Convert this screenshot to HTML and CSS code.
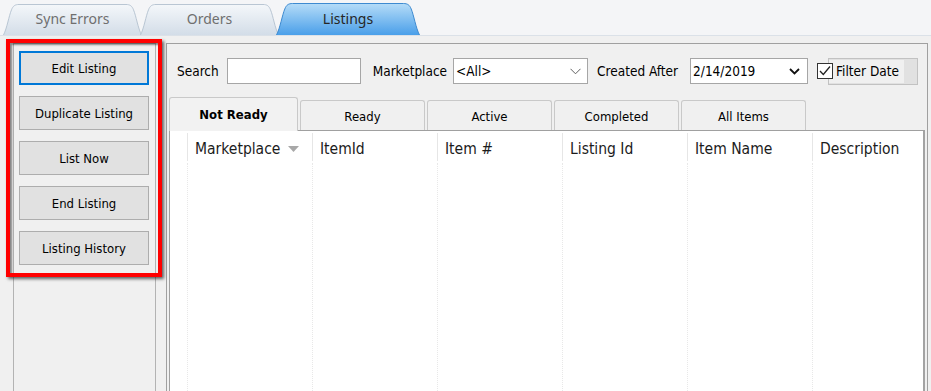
FILE: index.html
```html
<!DOCTYPE html>
<html lang="en">

    <head>
        <meta charset="UTF-8">
        <title>Listings</title>
        <link rel="stylesheet" href="styles.css">
    </head>

    <body>
        <div class="app">
            <svg class="defs" width="0" height="0">
                <defs>
                    <linearGradient id="tabIdle" x1="0" y1="0" x2="0" y2="1">
                        <stop offset="0" stop-color="#f4f7fa" />
                        <stop offset="1" stop-color="#d3dde8" />
                    </linearGradient>
                    <linearGradient id="tabActive" x1="0" y1="0" x2="0" y2="1">
                        <stop offset="0" stop-color="#b5dcf8" />
                        <stop offset="1" stop-color="#4a9fe9" />
                    </linearGradient>
                </defs>
            </svg>

            <!-- main tabs -->
            <div class="topbar">
                <div class="top-tab">
                    <svg class="tab-shape" viewBox="0 0 139 32" preserveAspectRatio="none">
                        <path d="M0.5 32 C4 25 6 12 8.5 6 C10 2 12 0.5 16 0.5 H123 C127 0.5 129 2 130.5 6 C133 12 135 25 138.5 32" fill="url(#tabIdle)" stroke="#b9c6d3" vector-effect="non-scaling-stroke" />
                    </svg>
                    <span>Sync Errors</span>
                </div>
                <div class="top-tab">
                    <svg class="tab-shape" viewBox="0 0 139 32" preserveAspectRatio="none">
                        <path d="M0.5 32 C4 25 6 12 8.5 6 C10 2 12 0.5 16 0.5 H123 C127 0.5 129 2 130.5 6 C133 12 135 25 138.5 32" fill="url(#tabIdle)" stroke="#b9c6d3" vector-effect="non-scaling-stroke" />
                    </svg>
                    <span>Orders</span>
                </div>
                <div class="top-tab active">
                    <svg class="tab-shape" viewBox="0 0 139 32" preserveAspectRatio="none">
                        <path d="M0.5 32 C4 25 6 12 8.5 6 C10 2 12 0.5 16 0.5 H123 C127 0.5 129 2 130.5 6 C133 12 135 25 138.5 32" fill="url(#tabActive)" stroke="#3d8ad0" vector-effect="non-scaling-stroke" />
                    </svg>
                    <span>Listings</span>
                </div>
            </div>

            <div class="workspace">
                <!-- action buttons -->
                <div class="sidebar">
                    <button class="btn focused">Edit Listing</button>
                    <button class="btn">Duplicate Listing</button>
                    <button class="btn">List Now</button>
                    <button class="btn">End Listing</button>
                    <button class="btn">Listing History</button>
                </div>

                <div class="panel">
                    <!-- filter row -->
                    <div class="filters">
                        <label class="field-label">Search</label>
                        <div class="input search"></div>
                        <label class="field-label gap">Marketplace</label>
                        <div class="input select market">
                            <span>&lt;All&gt;</span>
                            <svg width="11" height="7" viewBox="0 0 11 7">
                                <path d="M0.5 0.8 L5.5 5.8 L10.5 0.8" fill="none" stroke="#606060" stroke-width="1" />
                            </svg>
                        </div>
                        <label class="field-label gap-s">Created After</label>
                        <div class="input select date">
                            <span>2/14/2019</span>
                            <svg width="11" height="7" viewBox="0 0 11 7">
                                <path d="M1 1 L5.5 5.5 L10 1" fill="none" stroke="#111" stroke-width="1.8" />
                            </svg>
                        </div>
                        <div class="filter-box">
                            <div class="filter-inner">
                                <span class="check">
                                    <svg width="14" height="14" viewBox="0 0 14 14">
                                        <path d="M2 7 L5.3 10.5 L12 2.5" fill="none" stroke="#222" stroke-width="1.3" />
                                    </svg>
                                </span>
                                <span class="check-label">Filter Date</span>
                            </div>
                        </div>
                    </div>

                    <!-- status tabs -->
                    <div class="tabs">
                        <div class="tab current">Not Ready</div>
                        <div class="tab">Ready</div>
                        <div class="tab">Active</div>
                        <div class="tab">Completed</div>
                        <div class="tab">All Items</div>
                    </div>

                    <!-- listing grid -->
                    <div class="grid">
                        <div class="grid-head">
                            <div class="cell"></div>
                            <div class="cell">Marketplace
                                <svg class="sort" width="11" height="6" viewBox="0 0 11 6">
                                    <path d="M0 0 H11 L5.5 6 Z" fill="#a8a8a8" />
                                </svg>
                            </div>
                            <div class="cell">ItemId</div>
                            <div class="cell">Item #</div>
                            <div class="cell">Listing Id</div>
                            <div class="cell">Item Name</div>
                            <div class="cell">Description</div>
                        </div>
                        <div class="grid-body">
                            <div class="cell"></div>
                            <div class="cell"></div>
                            <div class="cell"></div>
                            <div class="cell"></div>
                            <div class="cell"></div>
                            <div class="cell"></div>
                            <div class="cell"></div>
                        </div>
                    </div>
                </div>
            </div>

            <!-- red annotation frame -->
            <div class="callout"></div>
        </div>
    </body>

</html>
```

FILE: styles.css
```css
* {
    box-sizing: border-box;
    margin: 0;
    padding: 0;
}

body {
    background: #f0f0f0;
    font-family: "DejaVu Sans Condensed", "DejaVu Sans", sans-serif;
    font-stretch: condensed;
}

.app {
    position: relative;
    width: 931px;
    height: 391px;
    overflow: hidden;
}

.defs {
    position: absolute;
}

/* main tabs */
.topbar {
    display: flex;
    align-items: flex-end;
    height: 36px;
    padding-left: 3px;
    background: #f4f5f7;
    border-bottom: 1px solid #dbe1e8;
}

.top-tab {
    position: relative;
    width: 139px;
    height: 31px;
    line-height: 30px;
    text-align: center;
    font-family: "Noto Sans", sans-serif;
    font-stretch: normal;
    font-size: 14px;
    color: #6f6f6f;
}

.top-tab + .top-tab {
    margin-left: -2px;
}

.top-tab.active {
    width: 144px;
    height: 32px;
    line-height: 32px;
    margin-left: -3px;
    color: #262626;
    z-index: 1;
}

.tab-shape {
    position: absolute;
    left: 0;
    top: 0;
    width: 100%;
    height: 100%;
}

.top-tab span {
    position: relative;
}

.workspace {
    display: flex;
    height: 355px;
    padding-top: 7px;
}

/* left buttons */
.sidebar {
    display: flex;
    flex-direction: column;
    gap: 11px;
    width: 143px;
    margin-left: 13px;
    padding: 7px 5px 0 5px;
    border: 1px solid #b3b3b3;
    border-bottom: 0;
}

.btn {
    width: 130px;
    height: 34px;
    background: #e1e1e1;
    border: 1px solid #adadad;
    font-family: inherit;
    font-stretch: condensed;
    font-size: 13px;
    color: #000;
}

.btn.focused {
    border: 2px solid #0078d7;
}

/* right panel */
.panel {
    display: flex;
    flex-direction: column;
    width: 762px;
    margin-left: 10px;
    padding: 0 2px;
    border: 1px solid #a0a0a0;
    border-bottom: 0;
}

.filters {
    display: flex;
    align-items: center;
    height: 28px;
    margin-top: 13px;
    padding-left: 8px;
    font-size: 13.5px;
    color: #000;
}

.field-label {
    margin-right: 8px;
}

.field-label.gap {
    margin-left: 12px;
    margin-right: 6px;
}

.field-label.gap-s {
    margin-left: 9px;
    margin-right: 12px;
}

.input {
    height: 26px;
    background: #fff;
    border: 1px solid #a6a6a6;
}

.search {
    width: 134px;
}

.select {
    display: flex;
    align-items: center;
    justify-content: space-between;
    padding: 0 6px 0 2px;
}

.market {
    width: 135px;
}

.date {
    width: 118px;
    padding-right: 7px;
}

.filter-box {
    width: 90px;
    height: 27px;
    margin-left: 20px;
    padding: 1px 0;
    background: #e1e1e1;
    border: 1px solid #c2c2c2;
}

.filter-inner {
    display: flex;
    align-items: center;
    width: 75px;
    height: 23px;
    background: #f0f0f0;
}

.check {
    display: flex;
    width: 16px;
    height: 16px;
    margin-left: -12px;
    background: #fff;
    border: 1px solid #333;
}

.check-label {
    margin-left: 3px;
    white-space: nowrap;
}

/* status tabs */
.tabs {
    position: relative;
    z-index: 1;
    display: flex;
    align-items: flex-end;
    gap: 2px;
    height: 33px;
    margin-top: 12px;
    font-size: 13px;
}

.tab {
    width: 125px;
    height: 30px;
    line-height: 31px;
    text-align: center;
    background: #f0f0f0;
    border: 1px solid #c9c9c9;
    border-bottom: 0;
    border-radius: 3px 3px 0 0;
}

.tab.current {
    width: 129px;
    height: 34px;
    line-height: 33px;
    margin-bottom: -1px;
    font-weight: bold;
    background: #f2f2f2;
}

/* grid */
.grid {
    display: flex;
    flex-direction: column;
    flex: 1;
    background: #fff;
    border: 1px solid #a0a0a0;
    border-right: 2px solid #a3a3a3;
    border-bottom: 0;
}

.grid-head,
.grid-body {
    display: grid;
    grid-template-columns: 17px repeat(5, 125px) 1fr;
}

.grid-head {
    height: 32px;
    font-size: 15.5px;
    color: #1c1c1c;
}

.grid-head .cell {
    display: flex;
    align-items: center;
    margin: 2px 0;
    padding: 3px 0 0 7px;
    border-left: 1px solid #e6e6e6;
    white-space: nowrap;
}

.grid-head .cell:first-child,
.grid-body .cell:first-child {
    border-left: 0;
}

.sort {
    margin-left: 8px;
}

.grid-body {
    flex: 1;
}

.grid-body .cell {
    border-left: 1px dotted #e8e8e8;
}

/* annotation */
.callout {
    position: absolute;
    left: 6px;
    top: 39px;
    width: 156px;
    height: 238px;
    border: 4px solid #ff0000;
    box-shadow: 2px 2px 3px rgba(0, 0, 0, 0.6), inset 2px 2px 2px rgba(0, 0, 0, 0.45);
    pointer-events: none;
}
```
